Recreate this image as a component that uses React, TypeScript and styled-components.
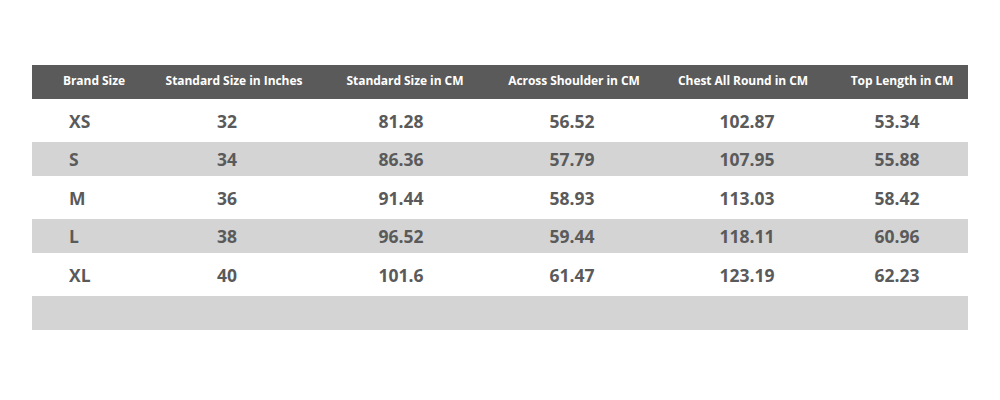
import React from "react";
import styled, { createGlobalStyle } from "styled-components";

const Global = createGlobalStyle`
  html, body { margin: 0; padding: 0; background: #ffffff; }
  body { font-family: "Open Sans", "Liberation Sans", sans-serif; }
`;

const Page = styled.div`
  width: 1000px;
  height: 400px;
  padding: 65px 32px 0 32px;
  box-sizing: border-box;
`;

const Table = styled.div`
  display: flex;
  flex-direction: column;
  width: 936px;
`;

const HeaderRow = styled.div`
  display: grid;
  grid-template-columns: 124px 156px 186px 152px 186px 132px;
  height: 34px;
  padding-bottom: 3px;
  box-sizing: border-box;
  align-items: center;
  background: #5a5a5a;
`;

const HeaderCell = styled.div`
  color: #ffffff;
  font-weight: 700;
  font-size: 12px;
  text-align: center;
  white-space: nowrap;
  letter-spacing: -0.05px;
`;

const Row = styled.div<{ $shaded: boolean; $tall: boolean }>`
  display: grid;
  grid-template-columns: 118px 154px 194px 148px 202px 98px;
  align-items: center;
  height: ${(p) => (p.$tall ? "43px" : "34px")};
  background: ${(p) => (p.$shaded ? "#d4d4d4" : "#ffffff")};
`;

const Cell = styled.div<{ $first?: boolean }>`
  color: #5a5a5a;
  font-weight: 700;
  font-size: 17.5px;
  text-align: ${(p) => (p.$first ? "left" : "center")};
  padding-left: ${(p) => (p.$first ? "37px" : "0")};
  white-space: nowrap;
`;

const headers = [
  "Brand Size",
  "Standard Size in Inches",
  "Standard Size in CM",
  "Across Shoulder in CM",
  "Chest All Round in CM",
  "Top Length in CM",
];

const rows: string[][] = [
  ["XS", "32", "81.28", "56.52", "102.87", "53.34"],
  ["S", "34", "86.36", "57.79", "107.95", "55.88"],
  ["M", "36", "91.44", "58.93", "113.03", "58.42"],
  ["L", "38", "96.52", "59.44", "118.11", "60.96"],
  ["XL", "40", "101.6", "61.47", "123.19", "62.23"],
  ["", "", "", "", "", ""],
];

export default function App() {
  return (
    <>
      <Global />
      <Page>
        <Table>
          <HeaderRow>
            {headers.map((h) => (
              <HeaderCell key={h}>{h}</HeaderCell>
            ))}
          </HeaderRow>
          {rows.map((r, i) => (
            <Row key={i} $shaded={i % 2 === 1} $tall={i % 2 === 0}>
              {r.map((c, j) => (
                <Cell key={j} $first={j === 0}>
                  {c}
                </Cell>
              ))}
            </Row>
          ))}
        </Table>
      </Page>
    </>
  );
}
